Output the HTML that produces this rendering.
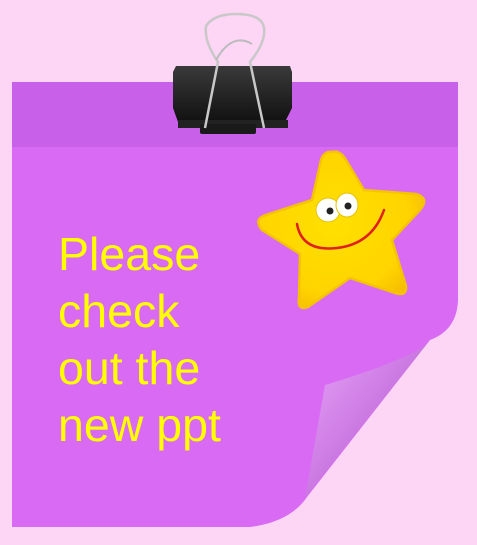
<!DOCTYPE html>
<html><head><style>
html,body{margin:0;padding:0;background:#fdd5f5;width:477px;height:545px;overflow:hidden}
.t{position:absolute;left:58px;top:226px;font-family:"Liberation Sans",sans-serif;font-size:46.5px;line-height:57px;color:#ffff00}
</style></head><body>
<svg width="477" height="545" style="position:absolute;left:0;top:0">
<defs>
<linearGradient id="curl" x1="0" y1="0" x2="1" y2="1">
<stop offset="0" stop-color="#e9a6f8"/><stop offset="0.55" stop-color="#c874e0"/><stop offset="1" stop-color="#9a45b5"/>
</linearGradient>
<radialGradient id="sg" cx="0.45" cy="0.45" r="0.6">
<stop offset="0" stop-color="#ffe000"/><stop offset="0.75" stop-color="#ffd400"/><stop offset="1" stop-color="#f7be00"/>
</radialGradient>
<linearGradient id="clip" x1="0" y1="0" x2="0" y2="1">
<stop offset="0" stop-color="#3a3a3a"/><stop offset="1" stop-color="#111"/>
</linearGradient>
</defs>
<path d="M12 82 H458 V300 Q457 330 430 340 L307 497 Q290 522 250 527 H12 Z" fill="#d86af4"/>
<rect x="12" y="82" width="446" height="65" fill="#c960ea"/>
<path d="M430 340 Q420 356 325 385 L305 498 Z" fill="url(#curl)"/>
<!-- clip -->
<path d="M176 66 H290 L292 72 V108 L285 122 H178 L173 108 V72 Z" fill="url(#clip)"/>
<rect x="178" y="120" width="110" height="8" fill="#222"/>
<rect x="200" y="124" width="56" height="10" rx="2" fill="#1a1a1a"/>
<path d="M205 128 L218 62 Q204 42 206 26 Q214 14 236 14 Q262 14 264 28 Q266 42 250 62 L264 128" fill="none" stroke="#c8c8c8" stroke-width="2.5"/>
<path d="M216 60 Q232 32 252 44" fill="none" stroke="#bbb" stroke-width="2"/>
<!-- star -->
<path d="M332 152 Q340 150 346 160 L364 190 L416 194 Q430 198 420 210 L392 240 L406 286 Q407 297 395 293 L350 278 L308 307 Q297 311 299 298 L300 254 L262 230 Q253 219 266 215 L312 200 L321 160 Q324 151 332 152 Z" fill="url(#sg)" stroke="#f5c400" stroke-width="2.5" stroke-linejoin="round"/>
<ellipse cx="328" cy="210" rx="12" ry="12" fill="#fff" stroke="#e6c200"/>
<ellipse cx="347" cy="205" rx="11" ry="12" fill="#fff" stroke="#e6c200"/>
<circle cx="330" cy="211" r="3.5" fill="#222"/>
<circle cx="348" cy="206" r="3.5" fill="#222"/>
<path d="M297 224 Q302 252 337 248 Q372 244 384 210" fill="none" stroke="#e02020" stroke-width="2.5" stroke-linecap="round"/>
</svg>
<div class="t">Please<br>check<br>out the<br>new ppt</div>
</body></html>
